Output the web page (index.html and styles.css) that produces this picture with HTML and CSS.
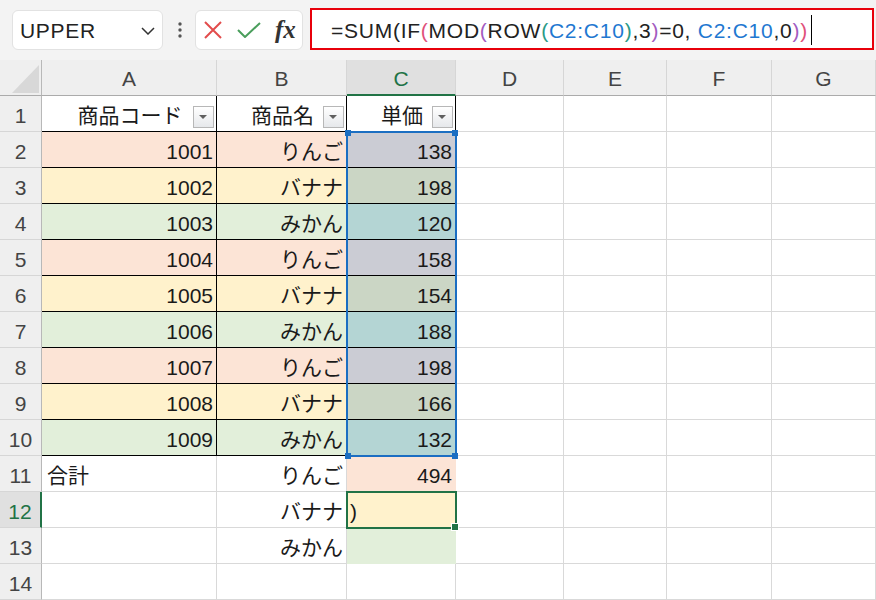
FILE: index.html
```html
<!DOCTYPE html>
<html lang="ja">
<head>
<meta charset="utf-8">
<title>Excel</title>
<link rel="stylesheet" href="styles.css">
</head>
<body>
<div class="topbar">
  <div class="namebox">
    <span class="nb-text">UPPER</span>
    <svg class="chev" width="14" height="8" viewBox="0 0 14 8"><path d="M1 1 L7 7 L13 1" fill="none" stroke="#333" stroke-width="1.5"/></svg>
  </div>
  <div class="dots">
    <svg width="4" height="16" viewBox="0 0 4 16"><circle cx="2" cy="2" r="1.7"/><circle cx="2" cy="8" r="1.7"/><circle cx="2" cy="14" r="1.7"/></svg>
  </div>
  <div class="fxbox">
    <svg class="ico-x" width="18" height="18" viewBox="0 0 18 18"><path d="M1 1 L17 17 M17 1 L1 17" stroke="#e24c4c" stroke-width="2"/></svg>
    <svg class="ico-ok" width="24" height="16" viewBox="0 0 24 16"><path d="M1 8 L8 15 L23 1" fill="none" stroke="#4a9e5c" stroke-width="2"/></svg>
    <span class="fx">fx</span>
  </div>
  <div class="formula"><span class="ftext">=SUM(IF<span class="p1">(</span>MOD<span class="p2">(</span>ROW<span class="p3">(</span><span class="ref">C2:C10</span><span class="p3">)</span>,3<span class="p2">)</span>=0, <span class="ref">C2:C10</span>,0<span class="p2">)</span><span class="p1">)</span></span><span class="caret"></span></div>
</div>

<div class="sheet">
  <div class="corner"><svg width="42" height="36" viewBox="0 0 42 36"><polygon points="39,5 39,33 12,33" fill="#d8d8d8"/></svg></div>
  <div class="ch">A</div><div class="ch">B</div><div class="ch on">C</div><div class="ch">D</div><div class="ch">E</div><div class="ch">F</div><div class="ch">G</div>

  <div class="rh">1</div>
  <div class="c tb ctr">商品コード<span class="fbtn"></span></div>
  <div class="c tb ctr">商品名<span class="fbtn"></span></div>
  <div class="c tb ctr">単価<span class="fbtn"></span></div>
  <div class="c"></div><div class="c"></div><div class="c"></div><div class="c"></div>

  <div class="rh">2</div>
  <div class="c tb r fp">1001</div><div class="c tb r fp">りんご</div><div class="c tb r sp">138</div>
  <div class="c"></div><div class="c"></div><div class="c"></div><div class="c"></div>

  <div class="rh">3</div>
  <div class="c tb r fy">1002</div><div class="c tb r fy">バナナ</div><div class="c tb r sy">198</div>
  <div class="c"></div><div class="c"></div><div class="c"></div><div class="c"></div>

  <div class="rh">4</div>
  <div class="c tb r fg">1003</div><div class="c tb r fg">みかん</div><div class="c tb r sg">120</div>
  <div class="c"></div><div class="c"></div><div class="c"></div><div class="c"></div>

  <div class="rh">5</div>
  <div class="c tb r fp">1004</div><div class="c tb r fp">りんご</div><div class="c tb r sp">158</div>
  <div class="c"></div><div class="c"></div><div class="c"></div><div class="c"></div>

  <div class="rh">6</div>
  <div class="c tb r fy">1005</div><div class="c tb r fy">バナナ</div><div class="c tb r sy">154</div>
  <div class="c"></div><div class="c"></div><div class="c"></div><div class="c"></div>

  <div class="rh">7</div>
  <div class="c tb r fg">1006</div><div class="c tb r fg">みかん</div><div class="c tb r sg">188</div>
  <div class="c"></div><div class="c"></div><div class="c"></div><div class="c"></div>

  <div class="rh">8</div>
  <div class="c tb r fp">1007</div><div class="c tb r fp">りんご</div><div class="c tb r sp">198</div>
  <div class="c"></div><div class="c"></div><div class="c"></div><div class="c"></div>

  <div class="rh">9</div>
  <div class="c tb r fy">1008</div><div class="c tb r fy">バナナ</div><div class="c tb r sy">166</div>
  <div class="c"></div><div class="c"></div><div class="c"></div><div class="c"></div>

  <div class="rh">10</div>
  <div class="c tb r fg">1009</div><div class="c tb r fg">みかん</div><div class="c tb r sg">132</div>
  <div class="c"></div><div class="c"></div><div class="c"></div><div class="c"></div>

  <div class="rh">11</div>
  <div class="c l">合計</div><div class="c r">りんご</div><div class="c r fp nb">494</div>
  <div class="c"></div><div class="c"></div><div class="c"></div><div class="c"></div>

  <div class="rh on">12</div>
  <div class="c"></div><div class="c r">バナナ</div><div class="c edit fy nb">)</div>
  <div class="c"></div><div class="c"></div><div class="c"></div><div class="c"></div>

  <div class="rh">13</div>
  <div class="c"></div><div class="c r">みかん</div><div class="c fg nb"></div>
  <div class="c"></div><div class="c"></div><div class="c"></div><div class="c"></div>

  <div class="rh">14</div>
  <div class="c"></div><div class="c"></div><div class="c"></div>
  <div class="c"></div><div class="c"></div><div class="c"></div><div class="c"></div>

  <div class="refsel"></div>
  <span class="hdl h-tl"></span><span class="hdl h-tr"></span><span class="hdl h-bl"></span><span class="hdl h-br"></span>
  <div class="active"></div>
  <span class="fill"></span>
</div>
</body>
</html>
```

FILE: styles.css
```css
* { box-sizing: border-box; }

body {
  margin: 0;
  width: 876px;
  height: 600px;
  overflow: hidden;
  background: #fff;
  font-family: "Liberation Sans", "Noto Sans CJK JP", sans-serif;
  color: #1a1a1a;
}

/* ---------- top bar ---------- */
.topbar {
  height: 60px;
  background: #f3f3f3;
  display: flex;
  align-items: flex-start;
  padding-left: 12px;
}

.namebox {
  margin-top: 10px;
  width: 151px;
  height: 40px;
  background: #fff;
  border: 1px solid #e2e2e2;
  border-radius: 6px;
  display: flex;
  align-items: center;
  justify-content: space-between;
  padding: 0 7px 0 7px;
}

.nb-text {
  font-size: 21px;
  letter-spacing: 0.7px;
  color: #222;
  line-height: 34px;
  padding-top: 2px;
}

.chev { margin-top: 1px; }

.dots {
  width: 32px;
  display: flex;
  justify-content: center;
  padding-top: 22px;
  padding-left: 1px;
}
.dots svg { fill: #555; }

.fxbox {
  margin-top: 10px;
  width: 108px;
  height: 40px;
  background: #fff;
  border: 1px solid #e2e2e2;
  border-radius: 6px;
  display: flex;
  align-items: center;
  padding-left: 8px;
}

.ico-ok { margin-left: 15px; }

.fx {
  margin-left: 14px;
  font-family: "Liberation Serif", serif;
  font-style: italic;
  font-weight: bold;
  font-size: 25px;
  color: #333;
  line-height: 1;
  margin-top: -2px;
}

.formula {
  margin-left: 7px;
  margin-top: 8px;
  width: 564px;
  height: 42px;
  background: #fff;
  border: 2px solid #e8000b;
  padding: 3px 0 0 19px;
  font-size: 21px;
  letter-spacing: 0.75px;
  line-height: 35px;
  color: #222;
  display: flex;
  align-items: flex-start;
  white-space: nowrap;
}

.p1 { color: #e0507a; }
.p2 { color: #a35bbf; }
.p3 { color: #2a9a86; }
.ref { color: #1f78d1; }

.caret {
  display: inline-block;
  width: 1px;
  height: 30px;
  background: #000;
  margin-left: 3px;
  margin-top: 2px;
}

/* ---------- sheet ---------- */
.sheet {
  position: relative;
  display: grid;
  grid-template-columns: 42px 175px 130px 109px 108px 103px 105px 104px;
  grid-template-rows: repeat(15, 36px);
  font-size: 21px;
}

.corner {
  background: #efefef;
  border-right: 1px solid #b8b8b8;
  border-bottom: 1px solid #ababab;
}
.corner svg { display: block; }

.ch {
  background: #efefef;
  border-right: 1px solid #d6d6d6;
  border-bottom: 1px solid #ababab;
  text-align: center;
  color: #444;
  line-height: 35px;
  padding-top: 1px;
}
.ch.on {
  background: #e0e0e0;
  color: #217346;
  border-bottom: 2px solid #217346;
}

.rh {
  background: #efefef;
  border-right: 1px solid #b8b8b8;
  border-bottom: 1px solid #d6d6d6;
  text-align: center;
  color: #444;
  line-height: 32px;
  padding-top: 4px;
}
.rh.on {
  background: #e0e0e0;
  color: #217346;
  border-right: 2px solid #217346;
}

.c {
  position: relative;
  border-right: 1px solid #d9d9d9;
  border-bottom: 1px solid #d9d9d9;
  line-height: 32px;
  padding: 4px 3px 0 5px;
  white-space: nowrap;
}

.c.tb {
  border-right-color: #000;
  border-bottom-color: #000;
}

.r { text-align: right; }
.ctr { text-align: center; }
.l { text-align: left; }
.edit { padding-left: 3px; }

.fp { background: #fce4d6; }
.fy { background: #fff2cc; }
.fg { background: #e2efda; }
.fp.nb { border-right-color: #fce4d6; border-bottom-color: #fce4d6; }
.fy.nb { border-right-color: #fff2cc; border-bottom-color: #fff2cc; }
.fg.nb { border-right-color: #e2efda; border-bottom-color: #e2efda; }

.sp { background: #cbccd4; }
.sy { background: #cbd6c5; }
.sg { background: #b4d5d4; }

.fbtn {
  position: absolute;
  right: 2px;
  top: 10px;
  width: 21px;
  height: 22px;
  border: 1px solid #b7b7b7;
  background: linear-gradient(#ffffff, #e6e8eb);
}
.fbtn::after {
  content: "";
  position: absolute;
  left: 5px;
  top: 8px;
  border-left: 4px solid transparent;
  border-right: 4px solid transparent;
  border-top: 4px solid #5f5f5f;
}

/* overlays */
.refsel {
  position: absolute;
  left: 346px;
  top: 71px;
  width: 111px;
  height: 326px;
  border: 2px solid #1b6ec2;
}

.hdl {
  position: absolute;
  width: 6px;
  height: 6px;
  background: #1b6ec2;
}
.h-tl { left: 345px; top: 70px; }
.h-tr { left: 452px; top: 70px; }
.h-bl { left: 345px; top: 393px; }
.h-br { left: 452px; top: 393px; }

.active {
  position: absolute;
  left: 346px;
  top: 431px;
  width: 111px;
  height: 38px;
  border: 2px solid #217346;
}

.fill {
  position: absolute;
  left: 451px;
  top: 463px;
  width: 8px;
  height: 8px;
  background: #217346;
  border: 1px solid #fff;
}
```
